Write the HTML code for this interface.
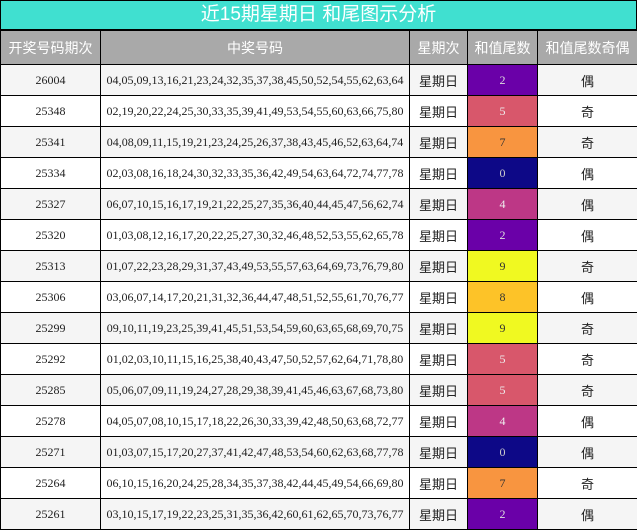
<!DOCTYPE html>
<html><head><meta charset="utf-8"><style>
body{margin:0;width:637px;height:530px;overflow:hidden;background:#fff;font-family:"Liberation Serif","Noto Sans CJK SC",serif}
.t{height:28px;background:#40e0d0;border:1px solid #000;color:#fff;font-family:"Liberation Sans","Noto Sans CJK SC",sans-serif;font-size:19px;line-height:28px;text-align:center;box-sizing:content-box;width:635px}
table{border-collapse:collapse;table-layout:fixed;width:637px;font-size:12px}
td,th{border:1px solid #000;text-align:center;padding:0;white-space:nowrap;overflow:hidden}
th{background:#a9a9a9;color:#fff;font-weight:normal;height:33px;font-family:"Liberation Sans","Noto Sans CJK SC",sans-serif;font-size:14px}
td{height:30px;color:#222}
tr:nth-child(even) td{background:#f5f5f5}
tr:nth-child(odd) td{background:#fff}
td.c{font-size:13px;font-family:"Liberation Sans","Noto Sans CJK SC",sans-serif}
td.n2{background:#6a00a8!important;color:#ddd}
td.n5{background:#d8576b!important;color:#eee}
td.n7{background:#f89540!important;color:#333}
td.n0{background:#0d0887!important;color:#ccc}
td.n4{background:#bd3786!important;color:#eee}
td.n9{background:#f0f921!important;color:#333}
td.n8{background:#fdc328!important;color:#333}
</style></head><body>
<div class="t">近15期星期日 和尾图示分析</div>
<table>
<colgroup><col style="width:100px"><col style="width:309px"><col style="width:58px"><col style="width:70px"><col style="width:100px"></colgroup>
<tr><th>开奖号码期次</th><th>中奖号码</th><th>星期次</th><th>和值尾数</th><th>和值尾数奇偶</th></tr>
<tr><td>26004</td><td>04,05,09,13,16,21,23,24,32,35,37,38,45,50,52,54,55,62,63,64</td><td class="c">星期日</td><td class="n2">2</td><td class="c">偶</td></tr>
<tr><td>25348</td><td>02,19,20,22,24,25,30,33,35,39,41,49,53,54,55,60,63,66,75,80</td><td class="c">星期日</td><td class="n5">5</td><td class="c">奇</td></tr>
<tr><td>25341</td><td>04,08,09,11,15,19,21,23,24,25,26,37,38,43,45,46,52,63,64,74</td><td class="c">星期日</td><td class="n7">7</td><td class="c">奇</td></tr>
<tr><td>25334</td><td>02,03,08,16,18,24,30,32,33,35,36,42,49,54,63,64,72,74,77,78</td><td class="c">星期日</td><td class="n0">0</td><td class="c">偶</td></tr>
<tr><td>25327</td><td>06,07,10,15,16,17,19,21,22,25,27,35,36,40,44,45,47,56,62,74</td><td class="c">星期日</td><td class="n4">4</td><td class="c">偶</td></tr>
<tr><td>25320</td><td>01,03,08,12,16,17,20,22,25,27,30,32,46,48,52,53,55,62,65,78</td><td class="c">星期日</td><td class="n2">2</td><td class="c">偶</td></tr>
<tr><td>25313</td><td>01,07,22,23,28,29,31,37,43,49,53,55,57,63,64,69,73,76,79,80</td><td class="c">星期日</td><td class="n9">9</td><td class="c">奇</td></tr>
<tr><td>25306</td><td>03,06,07,14,17,20,21,31,32,36,44,47,48,51,52,55,61,70,76,77</td><td class="c">星期日</td><td class="n8">8</td><td class="c">偶</td></tr>
<tr><td>25299</td><td>09,10,11,19,23,25,39,41,45,51,53,54,59,60,63,65,68,69,70,75</td><td class="c">星期日</td><td class="n9">9</td><td class="c">奇</td></tr>
<tr><td>25292</td><td>01,02,03,10,11,15,16,25,38,40,43,47,50,52,57,62,64,71,78,80</td><td class="c">星期日</td><td class="n5">5</td><td class="c">奇</td></tr>
<tr><td>25285</td><td>05,06,07,09,11,19,24,27,28,29,38,39,41,45,46,63,67,68,73,80</td><td class="c">星期日</td><td class="n5">5</td><td class="c">奇</td></tr>
<tr><td>25278</td><td>04,05,07,08,10,15,17,18,22,26,30,33,39,42,48,50,63,68,72,77</td><td class="c">星期日</td><td class="n4">4</td><td class="c">偶</td></tr>
<tr><td>25271</td><td>01,03,07,15,17,20,27,37,41,42,47,48,53,54,60,62,63,68,77,78</td><td class="c">星期日</td><td class="n0">0</td><td class="c">偶</td></tr>
<tr><td>25264</td><td>06,10,15,16,20,24,25,28,34,35,37,38,42,44,45,49,54,66,69,80</td><td class="c">星期日</td><td class="n7">7</td><td class="c">奇</td></tr>
<tr><td>25261</td><td>03,10,15,17,19,22,23,25,31,35,36,42,60,61,62,65,70,73,76,77</td><td class="c">星期日</td><td class="n2">2</td><td class="c">偶</td></tr>
</table>
</body></html>
